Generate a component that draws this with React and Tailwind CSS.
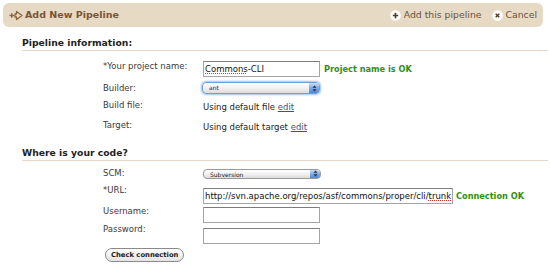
import React from 'react'

function HeaderIcon() {
  return (
    <svg width="14" height="11" viewBox="0 0 14 11" className="mr-[2px]">
      <path d="M0.5 5.5h4.5M2.75 3.2v4.6" stroke="#8a6440" strokeWidth="1.4" fill="none" />
      <path d="M7.5 1.5 L13 5.5 L7.5 9.5 L7.5 7 L6 7 L6 4 L7.5 4 Z" stroke="#8a6440" strokeWidth="1.3" fill="none" strokeLinejoin="round" />
    </svg>
  )
}

function CircleIcon({ kind }) {
  return (
    <svg width="11" height="11" viewBox="0 0 11 11" className="mr-[3px]">
      <circle cx="5.5" cy="5.5" r="5.3" fill="#fff" />
      {kind === 'plus' ? (
        <path d="M5.5 2.8v5.4M2.8 5.5h5.4" stroke="#5a3d24" strokeWidth="1.7" />
      ) : (
        <path d="M3.7 3.7l3.6 3.6M7.3 3.7l-3.6 3.6" stroke="#5a3d24" strokeWidth="1.5" />
      )}
    </svg>
  )
}

function Select({ value, focused }) {
  return (
    <div
      className={
        'w-[118px] flex items-stretch rounded-[4px] border bg-gradient-to-b from-white via-[#f1f1f1] to-[#dcdcdc] ' +
        (focused ? 'h-[12px] border-[#6f9fd8] shadow-[0_0_2px_1px_#9cc2ee]' : 'h-[10px] border-[#9a9a9a]')
      }
    >
      <span className="flex-1 pl-[6px] text-[6px] leading-[9px] text-[#222]">{value}</span>
      <span className="w-[10px] rounded-r-[3px] bg-gradient-to-b from-[#c9ddf5] via-[#7fabe3] to-[#4f86d4] flex items-center justify-center">
        <svg width="5" height="7" viewBox="0 0 5 7">
          <path d="M2.5 0.5L4.5 2.8H0.5Z M2.5 6.5L4.5 4.2H0.5Z" fill="#1b2a3d" />
        </svg>
      </span>
    </div>
  )
}

function Input({ value, width = 'w-[117px]', children }) {
  return (
    <div className={width + ' h-[16px] border border-[#a5a5a5] border-t-[#7d7d7d] bg-white pl-[1px] text-[8.5px] leading-[14px] text-[#111] whitespace-nowrap overflow-hidden'}>
      {children || value}
    </div>
  )
}

function Squiggle({ children }) {
  return <span className="underline decoration-dotted decoration-[#e03030] underline-offset-[1px]">{children}</span>
}

function Label({ children, className = '' }) {
  return <div className={'w-[100px] shrink-0 text-[8.5px] leading-[11px] text-[#3a3a3a] ' + className}>{children}</div>
}

function Section({ title }) {
  return (
    <div className="ml-[22px] mr-[2px] border-b border-[#e6d8c8] pb-[1px]">
      <div className="text-[9.25px] leading-[12px] font-bold text-[#1e1e1e]">{title}</div>
    </div>
  )
}

export default function App() {
  return (
    <div className="w-[550px] h-[268px] bg-white overflow-hidden font-['DejaVu_Sans',sans-serif]">
      {/* Header bar */}
      <div className="mt-[3px] ml-[3px] w-[540px] h-[24px] rounded-[6px] bg-[#e6dac5] flex items-center justify-between pl-[6px] pr-[6px]">
        <div className="flex items-center">
          <HeaderIcon />
          <span className="text-[9.5px] font-bold text-[#7a5535]">Add New Pipeline</span>
        </div>
        <div className="flex items-center text-[9.3px] text-[#6b523c]">
          <CircleIcon kind="plus" />
          <span>Add this pipeline</span>
          <span className="w-[10px]" />
          <CircleIcon kind="x" />
          <span>Cancel</span>
        </div>
      </div>

      <div className="mt-[10px]">
        <Section title="Pipeline information:" />
      </div>

      <div className="pl-[103px] mt-[10px]">
        <div className="flex items-start h-[21px]">
          <Label>*Your project name:</Label>
          <div className="flex items-center">
            <Input><Squiggle>Commons</Squiggle>-CLI</Input>
            <span className="ml-[4px] text-[8.2px] font-bold text-[#2f8f12]">Project name is OK</span>
          </div>
        </div>
        <div className="flex items-center h-[12px]">
          <Label>Builder:</Label>
          <div className="-ml-[1px]"><Select value="ant" focused /></div>
        </div>
        <div className="flex items-start h-[21px] pt-[6px]">
          <Label>Build file:</Label>
          <div className="pt-[2px] text-[8.5px] leading-[11px] text-[#222]">
            Using default file <span className="text-[#4a4a8c] underline">edit</span>
          </div>
        </div>
        <div className="flex items-start h-[21px] pt-[5px]">
          <Label>Target:</Label>
          <div className="pt-[2px] text-[8.5px] leading-[11px] text-[#222]">
            Using default target <span className="text-[#4a4a8c] underline">edit</span>
          </div>
        </div>
      </div>

      <div className="mt-[11px]">
        <Section title="Where is your code?" />
      </div>

      <div className="pl-[103px] mt-[7px]">
        <div className="flex items-center h-[11px]">
          <Label>SCM:</Label>
          <Select value="Subversion" />
        </div>
        <div className="flex items-start h-[19px] mt-[9px]">
          <Label className="-mt-[3px]">*URL:</Label>
          <div className="flex items-center">
            <Input width="w-[250px]">http://svn.apache.org/repos/asf/commons/proper/cli/<Squiggle>trunk</Squiggle></Input>
            <span className="ml-[3px] text-[8.2px] font-bold text-[#2f8f12]">Connection OK</span>
          </div>
        </div>
        <div className="flex items-start h-[21px]">
          <Label className="-mt-[1px]">Username:</Label>
          <Input value="" />
        </div>
        <div className="flex items-start h-[20px]">
          <Label className="-mt-[4px]">Password:</Label>
          <Input value="" />
        </div>
        <button className="block ml-[2px] h-[14px] px-[5px] rounded-full border border-[#8a8a8a] bg-gradient-to-b from-white to-[#e4e4e4] text-[6.8px] font-bold leading-[12px] text-[#1a1a1a]">
          Check connection
        </button>
      </div>
    </div>
  )
}
